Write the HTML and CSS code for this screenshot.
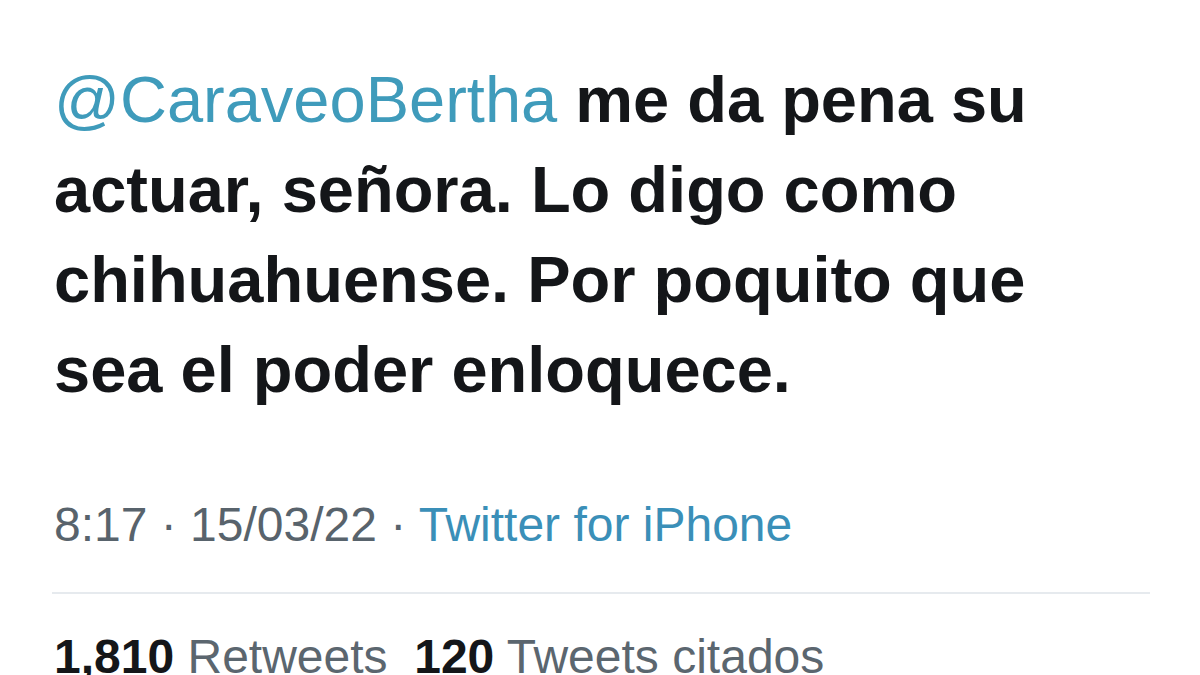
FILE: index.html
```html
<!DOCTYPE html>
<html lang="es">
<head>
<meta charset="utf-8">
<title>Tweet</title>
<link rel="stylesheet" href="styles.css">
</head>
<body>
  <main class="tweet">
    <p class="tweet-text"><a class="mention">@CaraveoBertha</a> me da pena su<br>actuar, señora. Lo digo como<br>chihuahuense. Por poquito que<br>sea el poder enloquece.</p>
    <p class="meta">8:17 · 15/03/22 · <span class="source">Twitter for iPhone</span></p>
    <hr class="divider">
    <p class="stats"><strong>1,810</strong> Retweets&nbsp; <strong>120</strong> Tweets citados</p>
  </main>
</body>
</html>
```
FILE: styles.css
```css
html, body {
  margin: 0;
  padding: 0;
  background: #ffffff;
  overflow: hidden;
}
body {
  width: 1200px;
  height: 675px;
  font-family: "Liberation Sans", Arial, sans-serif;
}
.tweet {
  padding: 55px 50px 0 54px;
}
.tweet-text {
  margin: 0;
  font-size: 65px;
  line-height: 90px;
  font-weight: 700;
  color: #141619;
}
.mention {
  font-weight: 400;
  color: #3f9bbb;
  text-decoration: none;
}
.meta {
  margin: 80px 0 0 0;
  font-size: 48px;
  line-height: 60px;
  color: #58636c;
}
.source {
  color: #3a8fb8;
}
.divider {
  margin: 37px 0 0 -2px;
  border: 0;
  height: 2px;
  background: #e6eaee;
}
.stats {
  margin: 33px 0 0 0;
  font-size: 48px;
  line-height: 60px;
  color: #5b666f;
}
.stats strong {
  color: #141619;
  font-weight: 700;
}
```
